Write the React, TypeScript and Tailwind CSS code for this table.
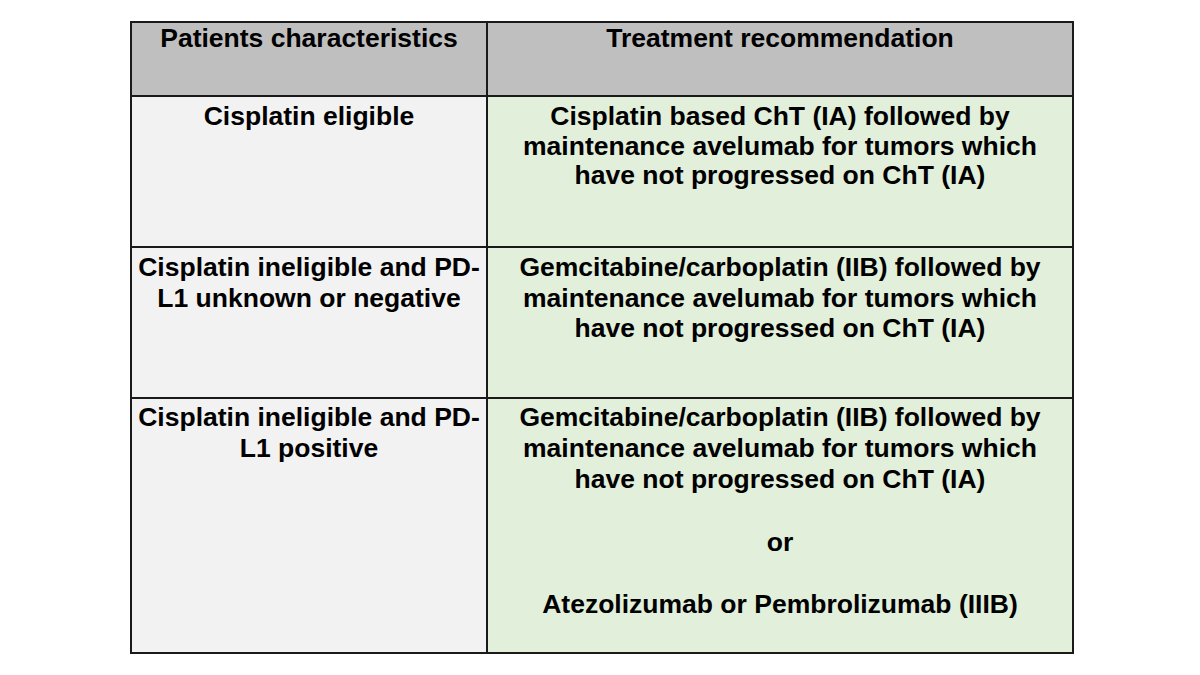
import React from "react";

const cellText = "font-bold text-[26.5px] text-black text-center whitespace-nowrap";

export default function App() {
  return (
    <div className="w-[1200px] h-[675px] bg-white" style={{ fontFamily: '"Liberation Sans", Arial, sans-serif' }}>
      <div className="pl-[130px] pt-[21px]">
        <div className="w-[944px] border-2 border-[#1a1a1a] grid grid-cols-[356px_1fr]">
          <div className="h-[74px] bg-[#bfbfbf] border-r-2 border-b-2 border-[#1a1a1a]">
            <p className={`${cellText} leading-[30px]`}>Patients characteristics</p>
          </div>
          <div className="h-[74px] bg-[#bfbfbf] border-b-2 border-[#1a1a1a]">
            <p className={`${cellText} leading-[30px]`}>Treatment recommendation</p>
          </div>

          <div className="h-[151px] bg-[#f2f2f2] border-r-2 border-b-2 border-[#1a1a1a] pt-[5px]">
            <p className={`${cellText} leading-[29.5px]`}>Cisplatin eligible</p>
          </div>
          <div className="h-[151px] bg-[#e2efda] border-b-2 border-[#1a1a1a] pt-[5px]">
            <p className={`${cellText} leading-[29.5px]`}>
              Cisplatin based ChT (IA) followed by<br />
              maintenance avelumab for tumors which<br />
              have not progressed on ChT (IA)
            </p>
          </div>

          <div className="h-[151px] bg-[#f2f2f2] border-r-2 border-b-2 border-[#1a1a1a] pt-[4px]">
            <p className={`${cellText} leading-[30.5px]`}>
              Cisplatin ineligible and PD-<br />
              L1 unknown or negative
            </p>
          </div>
          <div className="h-[151px] bg-[#e2efda] border-b-2 border-[#1a1a1a] pt-[4px]">
            <p className={`${cellText} leading-[30.5px]`}>
              Gemcitabine/carboplatin (IIB) followed by<br />
              maintenance avelumab for tumors which<br />
              have not progressed on ChT (IA)
            </p>
          </div>

          <div className="h-[253px] bg-[#f2f2f2] border-r-2 border-[#1a1a1a] pt-[3px]">
            <p className={`${cellText} leading-[31.2px]`}>
              Cisplatin ineligible and PD-<br />
              L1 positive
            </p>
          </div>
          <div className="h-[253px] bg-[#e2efda] pt-[3px]">
            <p className={`${cellText} leading-[31.2px]`}>
              Gemcitabine/carboplatin (IIB) followed by<br />
              maintenance avelumab for tumors which<br />
              have not progressed on ChT (IA)<br />
              <br />
              or<br />
              <br />
              Atezolizumab or Pembrolizumab (IIIB)
            </p>
          </div>
        </div>
      </div>
    </div>
  );
}
